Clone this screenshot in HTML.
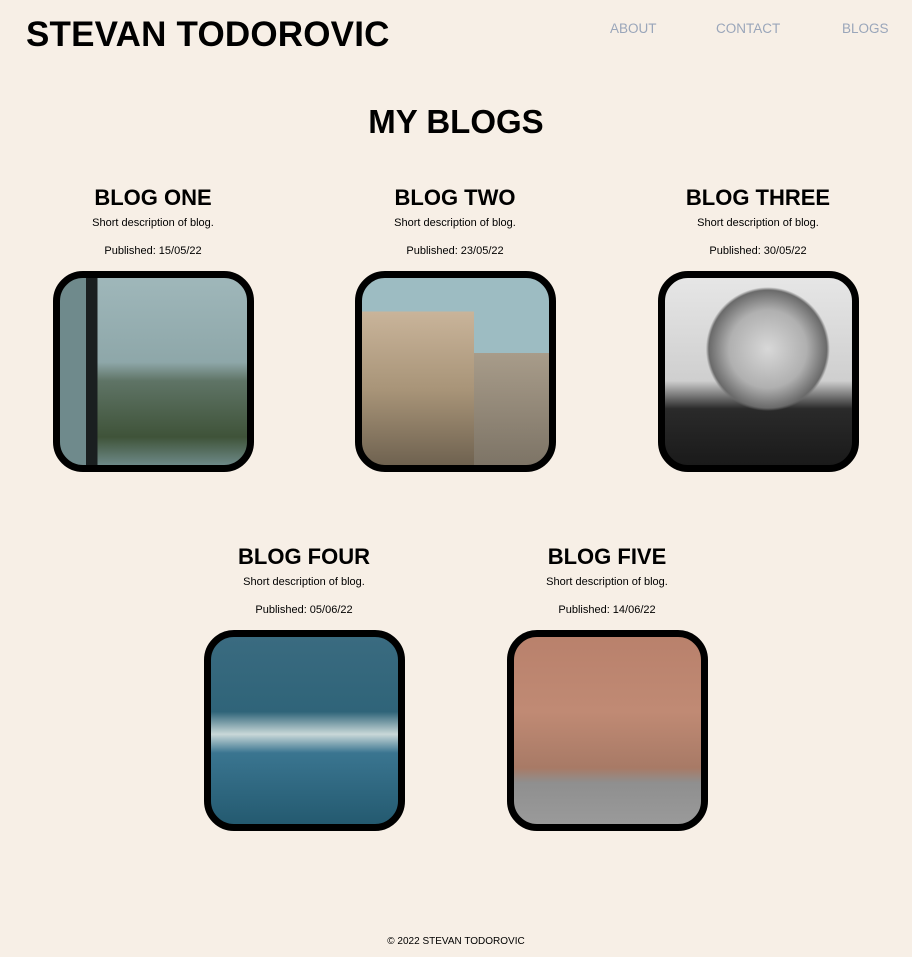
<!DOCTYPE html>
<html><head><meta charset="utf-8"><style>
*{margin:0;padding:0;box-sizing:border-box}
body{width:912px;height:957px;background:#f7efe6;font-family:"Liberation Sans",sans-serif;color:#000;position:relative;overflow:hidden}
.abs{position:absolute;white-space:nowrap}
.logo{left:26px;top:15px;font-size:35px;font-weight:bold;letter-spacing:0.2px}
.nav{top:21px;font-size:13.5px;color:#9aa6ba}
.h1{left:0;width:912px;text-align:center;top:103px;font-size:33px;font-weight:bold}
.card{position:absolute;width:260px;text-align:center}
.card h2{font-size:22px;font-weight:bold;height:28px;line-height:28px}
.card .d{font-size:11px;margin-top:5px;height:15px}
.card .p{font-size:11px;margin-top:13px;height:14px}
.img{width:201px;height:201px;border:7px solid #000;border-radius:30px;margin:12px auto 0;overflow:hidden}
.foot{left:0;width:912px;text-align:center;top:936px;font-size:10px}
</style></head><body>
<div class="abs logo">STEVAN TODOROVIC</div>
<div class="abs nav" style="left:610px">ABOUT</div>
<div class="abs nav" style="left:716px">CONTACT</div>
<div class="abs nav" style="left:842px">BLOGS</div>
<div class="abs h1">MY BLOGS</div>

<div class="card" style="left:23px;top:184px"><h2>BLOG ONE</h2><div class="d">Short description of blog.</div><div class="p">Published: 15/05/22</div>
<div class="img" style="background:linear-gradient(90deg,#6f8a8c 0,#6f8a8c 14%,#1a1f20 14%,#1a1f20 20%,transparent 20%),linear-gradient(180deg,#9fb7ba 0,#8ea7a9 45%,#5f7466 55%,#3f5339 85%,#6d8987 100%)"></div></div>

<div class="card" style="left:325px;top:184px"><h2>BLOG TWO</h2><div class="d">Short description of blog.</div><div class="p">Published: 23/05/22</div>
<div class="img" style="background:linear-gradient(180deg,transparent 0,transparent 18%,#c9b49a 18%,#a89478 60%,#6f6250 100%) 0 0/60% 100% no-repeat,linear-gradient(180deg,#9dbcc2 0,#9dbcc2 40%,#a89c8a 40%,#7d7466 100%)"></div></div>

<div class="card" style="left:628px;top:184px"><h2>BLOG THREE</h2><div class="d">Short description of blog.</div><div class="p">Published: 30/05/22</div>
<div class="img" style="background:radial-gradient(circle at 55% 38%,#d8d8d8 0,#b0b0b0 25%,#6a6a6a 38%,transparent 40%),linear-gradient(180deg,#e6e6e6 0,#cfcfcf 55%,#2a2a2a 70%,#1a1a1a 100%)"></div></div>

<div class="card" style="left:174px;top:543px"><h2>BLOG FOUR</h2><div class="d">Short description of blog.</div><div class="p">Published: 05/06/22</div>
<div class="img" style="background:linear-gradient(180deg,#3a6b80 0,#2f6479 40%,#c9d8d8 52%,#3a7590 62%,#245a70 100%)"></div></div>

<div class="card" style="left:477px;top:543px"><h2>BLOG FIVE</h2><div class="d">Short description of blog.</div><div class="p">Published: 14/06/22</div>
<div class="img" style="background:linear-gradient(180deg,#b9816c 0,#c08a74 40%,#a87a66 70%,#8f8f8f 78%,#9a9a9a 100%)"></div></div>

<div class="abs foot">© 2022 STEVAN TODOROVIC</div>
</body></html>
